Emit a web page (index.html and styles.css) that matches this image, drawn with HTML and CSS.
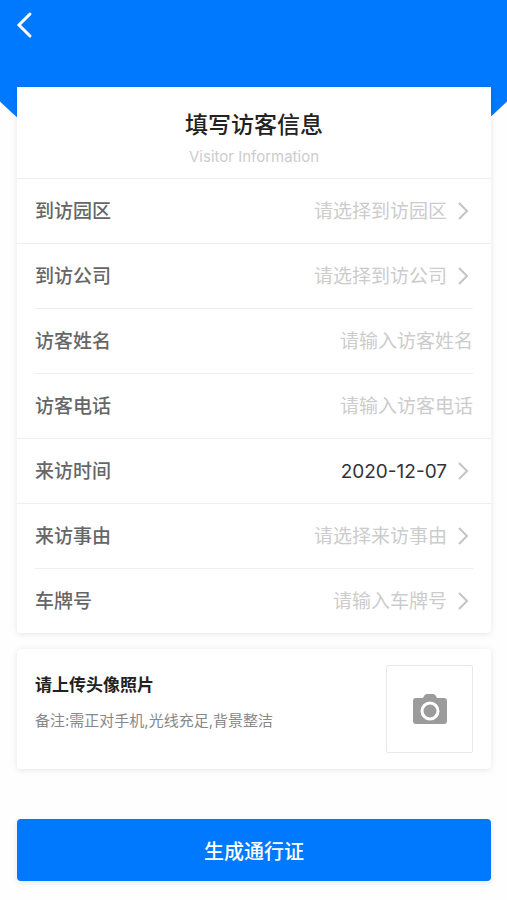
FILE: index.html
```html
<!DOCTYPE html>
<html lang="zh-CN">
<head>
  <meta charset="UTF-8">
  <meta name="viewport" content="width=device-width, initial-scale=1.0">
  <title>填写访客信息</title>
  <link rel="stylesheet" href="styles.css">
</head>
<body>

  <header class="banner">
    <button type="button" class="back" aria-label="返回">
      <svg width="18" height="28" viewBox="0 0 18 28"><path d="M14 3 L3 14 L14 25"/></svg>
    </button>
  </header>

  <form class="page">
    <section class="card">
      <div class="card-header">
        <h1>填写访客信息</h1>
        <p>Visitor Information</p>
      </div>

      <div class="row">
        <label for="park">到访园区</label>
        <select id="park">
          <option value="">请选择到访园区</option>
        </select>
        <svg class="arrow" width="18" height="20" viewBox="0 0 18 20"><path d="M4 2 L12 10 L4 18"/></svg>
      </div>
      <div class="row inset">
        <label for="company">到访公司</label>
        <select id="company">
          <option value="">请选择到访公司</option>
        </select>
        <svg class="arrow" width="18" height="20" viewBox="0 0 18 20"><path d="M4 2 L12 10 L4 18"/></svg>
      </div>
      <div class="row inset">
        <label for="visitorName">访客姓名</label>
        <input type="text" id="visitorName" placeholder="请输入访客姓名">
      </div>
      <div class="row">
        <label for="phone">访客电话</label>
        <input type="tel" id="phone" placeholder="请输入访客电话">
      </div>
      <div class="row">
        <label for="visitDate">来访时间</label>
        <input type="text" id="visitDate" value="2020-12-07">
        <svg class="arrow" width="18" height="20" viewBox="0 0 18 20"><path d="M4 2 L12 10 L4 18"/></svg>
      </div>
      <div class="row inset">
        <label for="reason">来访事由</label>
        <select id="reason">
          <option value="">请选择来访事由</option>
        </select>
        <svg class="arrow" width="18" height="20" viewBox="0 0 18 20"><path d="M4 2 L12 10 L4 18"/></svg>
      </div>
      <div class="row">
        <label for="plate">车牌号</label>
        <input type="text" id="plate" placeholder="请输入车牌号">
        <svg class="arrow" width="18" height="20" viewBox="0 0 18 20"><path d="M4 2 L12 10 L4 18"/></svg>
      </div>
    </section>

    <section class="card photo">
      <div class="photo-text">
        <h2>请上传头像照片</h2>
        <p>备注:需正对手机,光线充足,背景整洁</p>
      </div>
      <button type="button" class="upload" aria-label="上传照片">
        <svg width="34" height="30" viewBox="0 0 34 30">
          <path fill="#9b9b9b" d="M3 4 H10 L11 2 Q12 0 14 0 H20 Q22 0 23 2 L24 4 H31 Q34 4 34 7 V27 Q34 30 31 30 H3 Q0 30 0 27 V7 Q0 4 3 4 Z"/>
          <circle cx="17" cy="17" r="8" fill="none" stroke="#fff" stroke-width="3"/>
        </svg>
      </button>
    </section>

    <button type="submit" class="submit">生成通行证</button>
  </form>

</body>
</html>
```

FILE: styles.css
```css
* {
  box-sizing: border-box;
}
body {
  margin: 0;
  background-color: #fefefe;
  color: #222;
  font-family: Inter, "Noto Sans CJK SC", sans-serif;
}
h1, h2, p {
  margin: 0;
}
button, input, select {
  font-family: inherit;
  border: none;
  background: none;
  padding: 0;
  margin: 0;
}
button {
  cursor: pointer;
}
.banner {
  height: 206px;
  padding: 11px 16px;
  background-color: #0079ff;
  clip-path: ellipse(71% 360px at 50% -154px);
}
.back svg {
  display: block;
  fill: none;
  stroke: #fff;
  stroke-width: 3;
  stroke-linecap: round;
}
.page {
  position: relative;
  margin-top: -119px;
  padding: 0 16px 19px 17px;
}
.card {
  background-color: #fff;
  border-radius: 4px;
  box-shadow: 0 1px 6px rgba(0, 0, 0, 0.1);
  margin-bottom: 16px;
}
.card:first-child {
  border-radius: 0 0 4px 4px;
}
.card-header {
  height: 92px;
  padding-top: 22px;
  text-align: center;
  border-bottom: 1px solid #eee;
}
.card-header h1 {
  font-size: 23px;
  font-weight: 500;
  line-height: 32px;
}
.card-header p {
  font-size: 15px;
  line-height: 32px;
  color: #ccc;
}
.row {
  display: flex;
  align-items: center;
  height: 65px;
  padding: 0 18px;
  border-bottom: 1px solid #eee;
}
.row.inset {
  margin: 0 18px;
  padding: 0;
}
.row:last-child {
  height: 64px;
  border-bottom: none;
}
.row label {
  padding-bottom: 4px;
  font-size: 19px;
  font-weight: 500;
  color: #666;
}
.row input, .row select {
  flex: 1;
  min-width: 0;
  height: 40px;
  font-size: 19px;
  color: #333;
  text-align: right;
  outline: none;
}
.row select {
  appearance: none;
  color: #ccc;
  text-align-last: right;
}
.row input::placeholder {
  color: #ccc;
}
.arrow {
  flex: none;
  margin-left: 8px;
  fill: none;
  stroke: #c4c4c4;
  stroke-width: 2;
}
.photo {
  display: flex;
  justify-content: space-between;
  padding: 16px 18px;
}
.photo-text {
  padding-top: 8px;
}
.photo h2 {
  font-size: 17px;
  font-weight: 700;
  line-height: 24px;
}
.photo p {
  margin-top: 12px;
  font-size: 15px;
  line-height: 24px;
  color: #888;
}
.upload {
  display: flex;
  align-items: center;
  justify-content: center;
  width: 87px;
  height: 88px;
  border: 1px solid #e8e8e8;
  border-radius: 2px;
}
.submit {
  display: block;
  width: 100%;
  height: 62px;
  margin-top: 50px;
  border-radius: 4px;
  background-color: #0079ff;
  box-shadow: 0 2px 6px rgba(0, 0, 0, 0.1);
  color: #fff;
  font-size: 20px;
  font-weight: 500;
}
```
